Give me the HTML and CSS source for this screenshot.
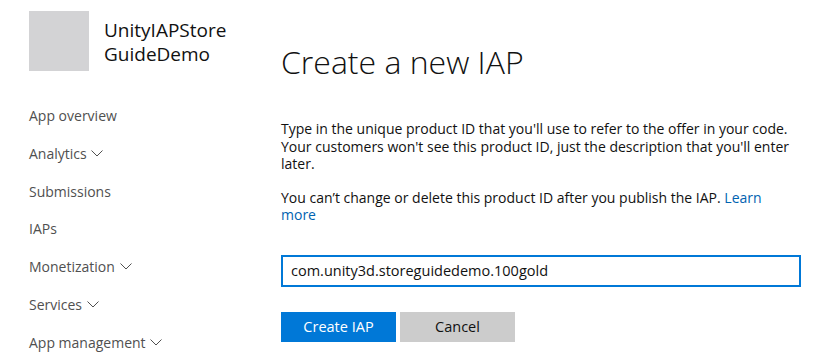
FILE: index.html
```html
<!doctype html>
<html lang="en">

<head>
  <meta charset="utf-8" />
  <meta name="viewport" content="width=device-width,initial-scale=1" />
  <title>Create a new IAP</title>

  <link rel="stylesheet" href="styles.css">
</head>

<body>
  <div id="root">
    <div class="sidebar">
      <div class="app">
        <div class="app-icon"></div>
        <div class="app-name">UnityIAPStore<br>GuideDemo</div>
      </div>
      <ul class="nav">
        <li>App overview</li>
        <li>Analytics <svg class="chev" width="12" height="7" viewBox="0 0 12 7"><polyline points="0.5,0.5 6,6 11.5,0.5" /></svg></li>
        <li>Submissions</li>
        <li>IAPs</li>
        <li>Monetization <svg class="chev" width="12" height="7" viewBox="0 0 12 7"><polyline points="0.5,0.5 6,6 11.5,0.5" /></svg></li>
        <li>Services <svg class="chev" width="12" height="7" viewBox="0 0 12 7"><polyline points="0.5,0.5 6,6 11.5,0.5" /></svg></li>
        <li>App management <svg class="chev" width="12" height="7" viewBox="0 0 12 7"><polyline points="0.5,0.5 6,6 11.5,0.5" /></svg></li>
      </ul>
    </div>
    <div class="main">
      <h1>Create a new IAP</h1>
      <p>Type in the unique product ID that you'll use to refer to the offer in your code. Your customers won't see this product ID, just the description that you'll enter later.</p>
      <p>You can’t change or delete this product ID after you publish the IAP. <a href="#">Learn more</a></p>
      <div class="field">
        <input type="text" value="com.unity3d.storeguidedemo.100gold" />
      </div>
      <div class="buttons">
        <button type="button" class="primary">Create IAP</button>
        <button type="button" class="secondary">Cancel</button>
      </div>
    </div>
  </div>
</body>

</html>
```

FILE: styles.css
```css
html,
body {
  margin: 0;
  padding: 0;
  background: #fff;
}

* {
  font-family: "Open Sans", "Noto Sans", sans-serif;
  box-sizing: border-box;
}

#root {
  display: flex;
  flex-direction: row;
}

.sidebar {
  width: 281px;
  padding-left: 29px;
  padding-top: 11px;
}

.app {
  display: flex;
  flex-direction: row;
}

.app-icon {
  width: 60px;
  height: 60px;
  background: #d3d3d5;
}

.app-name {
  margin-left: 15px;
  margin-top: 7px;
  font-size: 19px;
  line-height: 24px;
  color: #111;
}

.nav {
  list-style: none;
  margin: 0;
  padding: 0;
  margin-top: 35px;
}

.nav li {
  font-size: 14px;
  line-height: 20px;
  height: 37.8px;
  color: #505050;
}

.chev {
  fill: none;
  stroke: #505050;
  stroke-width: 1;
  margin-left: 1px;
  vertical-align: 2px;
}

.main {
  width: 520px;
  padding-top: 39px;
}

h1 {
  margin: 0;
  font-size: 32px;
  font-weight: 300;
  line-height: 46px;
  color: #111;
  margin-bottom: 35px;
}

p {
  width: 516px;
  margin: 0 0 16px 0;
  font-size: 14px;
  line-height: 17.5px;
  color: #111;
}

a {
  color: #0063b1;
  text-decoration: none;
}

.field {
  margin-top: 31px;
}

input {
  width: 520px;
  height: 32px;
  border: 2px solid #0078d7;
  padding: 0 8px;
  font-size: 14.5px;
  color: #111;
  outline: none;
}

.buttons {
  display: flex;
  flex-direction: row;
  margin-top: 25px;
}

.buttons button {
  height: 30px;
  width: 115px;
  border: none;
  font-size: 14.5px;
  margin-right: 4px;
  padding: 0;
}

.primary {
  background: #0078d7;
  color: #fff;
}

.secondary {
  background: #ccc;
  color: #111;
}
```
